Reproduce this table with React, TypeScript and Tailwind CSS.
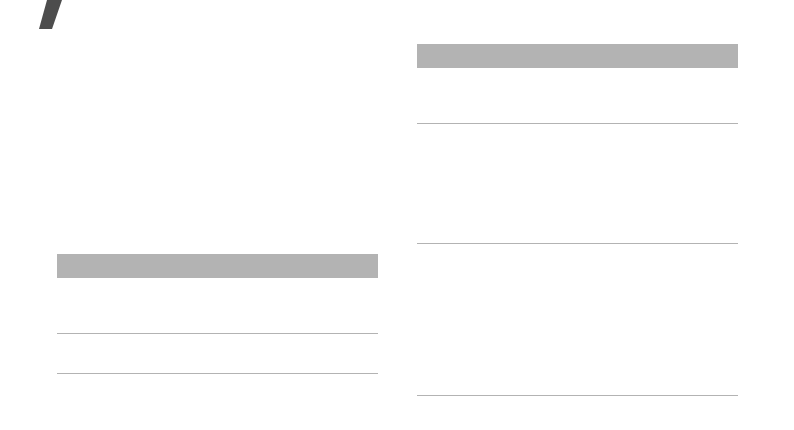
export default function App() {
  return (
    <div className="w-[794px] h-[430px] bg-white overflow-hidden flex">
      {/* Left column */}
      <div className="w-[378px] pl-[39px] flex flex-col">
        <svg width="23" height="29" viewBox="0 0 23 29" className="block">
          <polygon points="8,0 23,0 13,29 0,29" fill="#4d4d4d" />
        </svg>
        <div className="ml-[18px] w-[321px] mt-[225px]">
          <div className="h-[24px] bg-[#b3b3b3]" />
          <div className="h-[56px] border-b border-[#b3b3b3]" />
          <div className="h-[40px] border-b border-[#b3b3b3]" />
        </div>
      </div>

      {/* Right column */}
      <div className="ml-[39px] w-[321px] pt-[44px]">
        <div className="h-[24px] bg-[#b3b3b3]" />
        <div className="h-[56px] border-b border-[#b3b3b3]" />
        <div className="h-[120px] border-b border-[#b3b3b3]" />
        <div className="h-[152px] border-b border-[#b3b3b3]" />
      </div>
    </div>
  );
}
